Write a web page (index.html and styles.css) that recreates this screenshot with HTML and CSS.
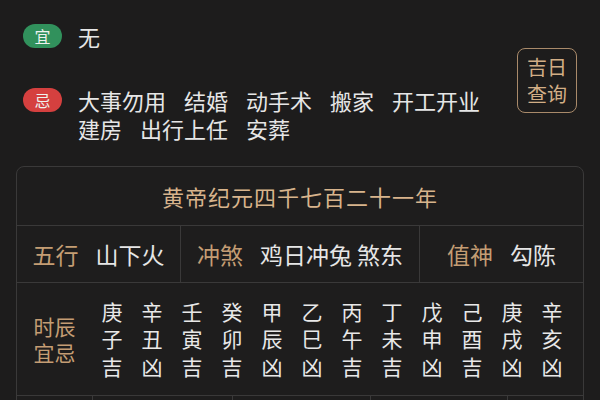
FILE: index.html
```html
<!DOCTYPE html>
<html lang="zh-CN">
<head>
<meta charset="utf-8">
<link rel="stylesheet" href="styles.css">
</head>
<body>
<div class="top">
  <div class="left">
    <div class="row">
      <span class="badge green">宜</span>
      <div class="items"><span class="item">无</span></div>
    </div>
    <div class="row row-ji">
      <span class="badge red">忌</span>
      <div class="items">
        <span class="item">大事勿用</span><span class="item">结婚</span><span class="item">动手术</span><span class="item">搬家</span><span class="item">开工开业</span><span class="item">建房</span><span class="item">出行上任</span><span class="item">安葬</span>
      </div>
    </div>
  </div>
  <div class="query">吉日<br>查询</div>
</div>

<div class="card">
  <div class="title">黄帝纪元四千七百二十一年</div>
  <div class="info">
    <div class="cell"><span class="lab">五行</span><span class="val">山下火</span></div>
    <div class="cell"><span class="lab">冲煞</span><span class="val">鸡日冲兔 煞东</span></div>
    <div class="cell"><span class="lab">值神</span><span class="val">勾陈</span></div>
  </div>
  <div class="hours">
    <div class="hlabel">时辰<br>宜忌</div>
    <div class="hgrid">
      <div class="h">庚<br>子<br>吉</div>
      <div class="h">辛<br>丑<br>凶</div>
      <div class="h">壬<br>寅<br>吉</div>
      <div class="h">癸<br>卯<br>吉</div>
      <div class="h">甲<br>辰<br>凶</div>
      <div class="h">乙<br>巳<br>凶</div>
      <div class="h">丙<br>午<br>吉</div>
      <div class="h">丁<br>未<br>吉</div>
      <div class="h">戊<br>申<br>凶</div>
      <div class="h">己<br>酉<br>吉</div>
      <div class="h">庚<br>戌<br>凶</div>
      <div class="h">辛<br>亥<br>凶</div>
    </div>
  </div>
  <div class="bottom">
    <div class="bc"></div>
    <div class="bc"></div>
    <div class="bc"></div>
    <div class="bc"></div>
    <div class="bc"></div>
  </div>
</div>
</body>
</html>
```
FILE: styles.css
```css
html, body {
  margin: 0;
  padding: 0;
  background: #1d1c1c;
  color: #e6e6e6;
  font-family: "Noto Sans CJK SC", "Noto Sans", sans-serif;
  width: 600px;
  height: 400px;
  overflow: hidden;
}

.top {
  display: flex;
  padding: 22px 23px 0 23px;
  gap: 10px;
}

.left {
  flex: 1;
  min-width: 0;
}

.row {
  display: flex;
  align-items: flex-start;
  gap: 16px;
}

.row-ji {
  margin-top: 36px;
}

.badge {
  flex: none;
  width: 39px;
  height: 24px;
  margin-top: 2px;
  border-radius: 12px;
  font-size: 16px;
  line-height: 24px;
  text-align: center;
  color: #eef2ee;
}

.green { background: #31915c; }
.red { background: #d5403f; }

.items {
  font-size: 22px;
  line-height: 28px;
}

.item {
  display: inline-block;
  white-space: nowrap;
  margin-right: 18px;
}

.query {
  flex: none;
  margin-top: 26px;
  width: 60px;
  height: 65px;
  box-sizing: border-box;
  padding-top: 4px;
  border: 1.5px solid #a98a6a;
  border-radius: 8px;
  color: #d2ae86;
  font-size: 20px;
  line-height: 27px;
  text-align: center;
}

.card {
  margin: 24px 16px 0 16px;
  border: 1px solid #3a3939;
  border-radius: 8px;
  background: #1e1d1d;
}

.title {
  height: 58px;
  line-height: 58px;
  text-align: center;
  font-size: 22px;
  letter-spacing: 1px;
  color: #d8b48c;
  border-bottom: 1px solid #3a3939;
}

.info {
  display: grid;
  grid-template-columns: 163px 239px 1fr;
  height: 56px;
  border-bottom: 1px solid #3a3939;
}

.cell {
  display: flex;
  align-items: center;
  justify-content: center;
  gap: 17px;
  font-size: 23px;
}

.cell + .cell {
  border-left: 1px solid #3a3939;
}

.lab {
  color: #c49d74;
}

.val {
  color: #e6e6e6;
}

.hours {
  display: flex;
  align-items: center;
  height: 112px;
  border-bottom: 1px solid #3a3939;
}

.hlabel {
  width: 75px;
  text-align: center;
  font-size: 21px;
  line-height: 26px;
  color: #c49d74;
}

.hgrid {
  display: grid;
  grid-template-columns: repeat(12, 40px);
}

.h {
  text-align: center;
  font-size: 21px;
  line-height: 27.5px;
  color: #e8e8e8;
}

.bottom {
  display: grid;
  grid-template-columns: 75px 140px 138px 137px 1fr;
  height: 60px;
}

.bc + .bc {
  border-left: 1px solid #3a3939;
}
```
